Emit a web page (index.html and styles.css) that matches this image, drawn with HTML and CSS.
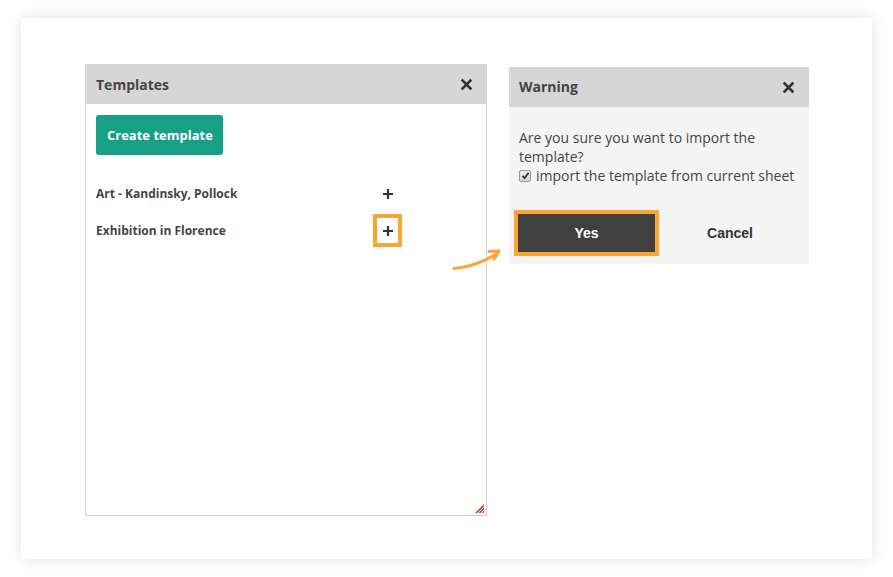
FILE: index.html
```html
<!DOCTYPE html>
<html>
<head>
<meta charset="utf-8">
<link rel="stylesheet" href="styles.css">
</head>
<body>
<div class="card">
  <div class="panel templates">
    <div class="panel-head">
      <span class="panel-title">Templates</span>
      <svg class="close" width="11" height="11" viewBox="0 0 11 11"><path d="M1.5 1.5 L9.5 9.5 M9.5 1.5 L1.5 9.5" stroke="#333" stroke-width="2.6" stroke-linecap="square"/></svg>
    </div>
    <div class="panel-body">
      <button class="create">Create template</button>
      <div class="list">
        <div class="row">
          <span class="name">Art - Kandinsky, Pollock</span>
          <span class="plus"><svg width="12" height="12" viewBox="0 0 12 12"><path d="M6 1 V11 M1 6 H11" stroke="#333" stroke-width="2.2"/></svg></span>
        </div>
        <div class="row">
          <span class="name">Exhibition in Florence</span>
          <span class="plus hl"><svg width="12" height="12" viewBox="0 0 12 12"><path d="M6 1 V11 M1 6 H11" stroke="#333" stroke-width="2.2"/></svg></span>
        </div>
      </div>
    </div>
    <svg class="resize" width="9" height="9" viewBox="0 0 9 9"><path d="M9 0 L9 9 L0 9 Z" fill="#e5483c"/><path d="M9 3 L3 9 M9 6 L6 9" stroke="#fff" stroke-width="0.9"/></svg>
  </div>

  <div class="panel warning">
    <div class="panel-head">
      <span class="panel-title">Warning</span>
      <svg class="close" width="11" height="11" viewBox="0 0 11 11"><path d="M1.5 1.5 L9.5 9.5 M9.5 1.5 L1.5 9.5" stroke="#333" stroke-width="2.6" stroke-linecap="square"/></svg>
    </div>
    <div class="warn-body">
      <p class="msg">Are you sure you want to import the template?</p>
      <label class="check"><span class="box"><svg width="9" height="9" viewBox="0 0 9 9"><path d="M1.5 4.8 L3.6 7 L7.6 1.8" fill="none" stroke="#333" stroke-width="1.8"/></svg></span>import the template from current sheet</label>
    </div>
    <div class="actions">
      <div class="yes-wrap"><button class="yes">Yes</button></div>
      <button class="cancel">Cancel</button>
    </div>
  </div>

  <svg class="arrow" width="52" height="26" viewBox="0 0 52 26"><path d="M2 21.5 Q24 20 46 6" fill="none" stroke="#f9a633" stroke-width="3.2" stroke-linecap="round"/><path d="M37 4.5 L47 4 L42 12" fill="none" stroke="#f9a633" stroke-width="3.2" stroke-linecap="round" stroke-linejoin="round"/></svg>
</div>
</body>
</html>
```
FILE: styles.css
```css
* { box-sizing: border-box; }
html, body { margin: 0; padding: 0; background: #fff; }
body { width: 893px; height: 577px; overflow: hidden; font-family: "Open Sans", sans-serif; color: #444; }

.card {
  position: relative;
  margin: 18px 0 0 21px;
  width: 851px;
  height: 541px;
  background: #fff;
  box-shadow: 0 0 14px rgba(0,0,0,0.13);
  display: flex;
  align-items: flex-start;
  gap: 22px;
  padding: 46px 0 0 64px;
}

.panel { position: relative; }

.panel-head {
  height: 40px;
  background: #d6d6d6;
  display: flex;
  align-items: center;
  justify-content: space-between;
  padding: 0 16px 0 10px;
}
.panel-title { font-weight: 700; font-size: 14px; color: #444; }
.close { display: block; }

.templates {
  width: 402px;
  height: 452px;
  border: 1px solid #d0d0d0;
  border-top: none;
}
.templates .panel-head { margin: 0 -1px; padding: 0 15px 0 11px; }

.panel-body { padding: 11px 10px; }

.create {
  display: block;
  height: 40px;
  padding: 0 10px 0 11px;
  border: none;
  border-radius: 3px;
  background: #17a085;
  color: #fff;
  font-family: "Open Sans", sans-serif;
  font-weight: 700;
  font-size: 13px;
}

.list { margin-top: 20px; }
.row { display: flex; align-items: center; height: 37px; }
.name { width: 277px; font-weight: 700; font-size: 12px; color: #444; }
.plus {
  width: 29px; height: 33px;
  display: flex; align-items: center; justify-content: center;
  border: 4px solid transparent;
}
.plus.hl { border-color: #f9a633; }

.resize { position: absolute; right: 2px; bottom: 2px; }

.warning {
  width: 300px;
  margin-top: 3px;
  background: #f4f4f4;
}
.warning .panel-head { padding-right: 15px; }
.warning .panel-title { position: relative; top: -1px; }
.warn-body { padding: 21px 10px 0; font-size: 14px; line-height: 19px; color: #444; }
.msg { margin: 0; }
.check { display: flex; align-items: center; }
.box {
  width: 12px; height: 12px; margin-right: 5px;
  border: 1px solid #999; border-radius: 2px;
  background: linear-gradient(#eee, #d2d2d2);
  display: flex; align-items: center; justify-content: center;
}

.actions { display: flex; align-items: center; padding: 25px 0 8px 5px; }
.yes-wrap { border: 4px solid #f9a633; }
.yes {
  display: block;
  width: 137px; height: 38px;
  border: none;
  background: #404040;
  color: #fff;
  font-family: "Liberation Sans", Arial, sans-serif;
  font-weight: 700;
  font-size: 14px;
}
.cancel {
  flex: 1;
  height: 38px;
  border: none;
  background: transparent;
  color: #333;
  font-family: "Liberation Sans", Arial, sans-serif;
  font-weight: 700;
  font-size: 14px;
  padding-right: 14px;
}

.arrow { position: absolute; left: 431px; top: 229px; }
```
